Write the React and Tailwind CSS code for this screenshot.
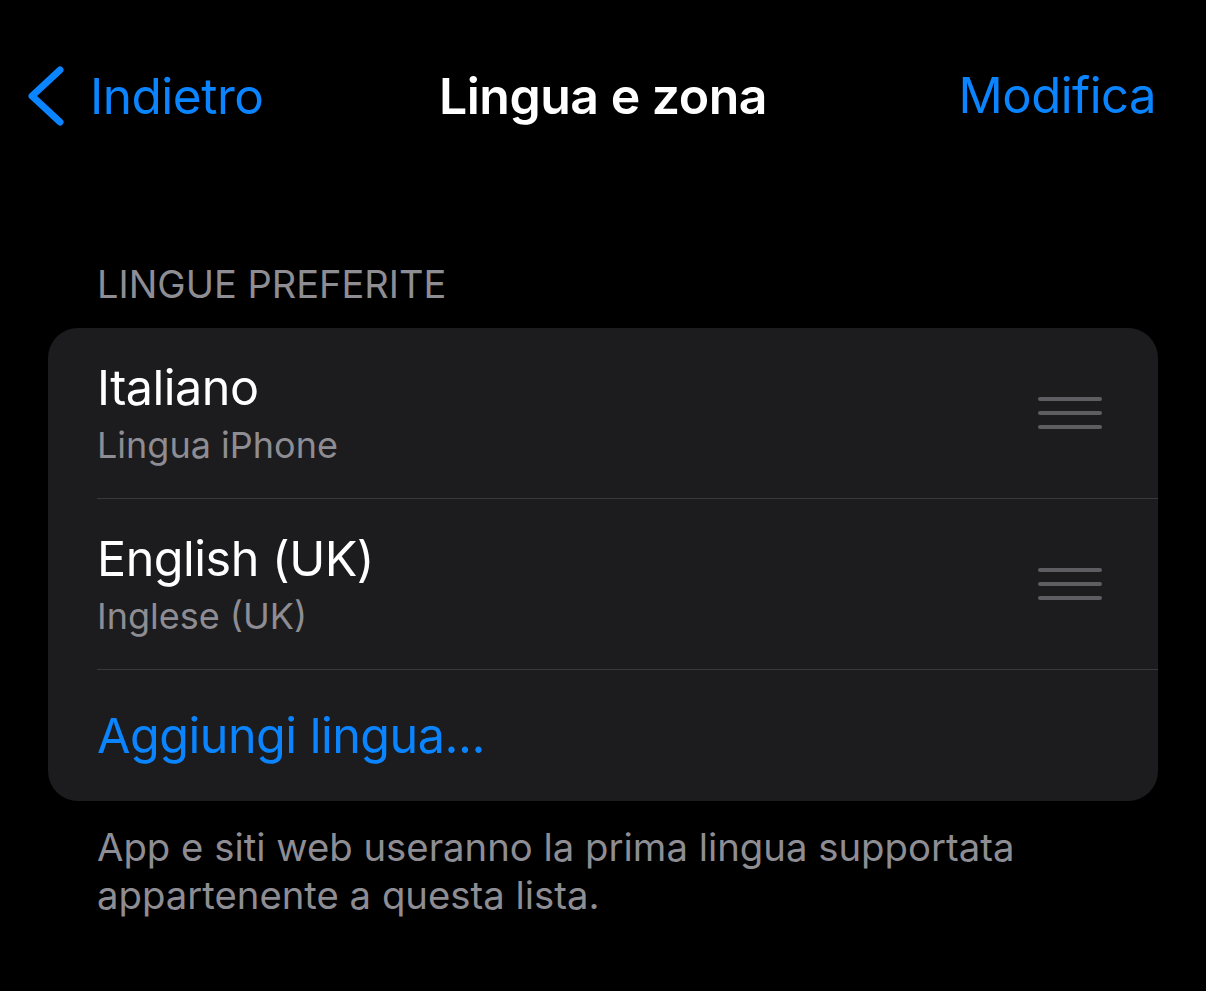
export default function App() {
  const font = { fontFamily: 'Inter, "Noto Sans", sans-serif' };
  const Handle = () => (
    <div className="flex flex-col gap-[10px] w-[64px]">
      <div className="h-[4px] rounded-full bg-[#5d5d62]" />
      <div className="h-[4px] rounded-full bg-[#5d5d62]" />
      <div className="h-[4px] rounded-full bg-[#5d5d62]" />
    </div>
  );
  return (
    <div className="w-[1206px] h-[991px] bg-black overflow-hidden" style={font}>
      {/* Nav */}
      <div className="relative h-[195px] flex items-start pt-[66px]">
        <div className="flex items-center pl-[26px] text-[#0a84ff]">
          <svg width="40" height="60" viewBox="0 0 40 60" className="mr-[24px]">
            <path d="M34 4 L6 30 L34 56" fill="none" stroke="#0a84ff" strokeWidth="7" strokeLinecap="round" strokeLinejoin="round" />
          </svg>
          <span className="text-[49.5px] leading-[60px] tracking-[-0.5px]">Indietro</span>
        </div>
        <div className="absolute left-0 right-0 top-[66px] flex justify-center pointer-events-none">
          <span className="text-[50px] leading-[60px] font-semibold text-white tracking-[-0.5px]">Lingua e zona</span>
        </div>
        <div className="ml-auto pr-[50px] flex items-center h-[60px]">
          <span className="text-[49px] leading-[60px] text-[#0a84ff] tracking-[-0.5px]">Modifica</span>
        </div>
      </div>

      {/* Section */}
      <div className="px-[48px]">
        <div className="pl-[49px] text-[38px] leading-[48px] text-[#8d8d93] uppercase pt-[65px] pb-[20px]">Lingue preferite</div>
        <div className="bg-[#1c1c1e] rounded-[30px] w-[1110px]">
          <div className="flex items-center h-[170px] pl-[49px] pr-[56px]">
            <div className="flex-1">
              <div className="text-[48.5px] leading-[60px] text-white tracking-[-0.5px]">Italiano</div>
              <div className="text-[36px] leading-[46px] text-[#8d8d93] mt-[4px]">Lingua iPhone</div>
            </div>
            <Handle />
          </div>
          <div className="ml-[49px] h-px bg-[#3a3a3c]" />
          <div className="flex items-center h-[170px] pl-[49px] pr-[56px]">
            <div className="flex-1">
              <div className="text-[48.5px] leading-[60px] text-white tracking-[-0.5px]">English (UK)</div>
              <div className="text-[36px] leading-[46px] text-[#8d8d93] mt-[4px]">Inglese (UK)</div>
            </div>
            <Handle />
          </div>
          <div className="ml-[49px] h-px bg-[#3a3a3c]" />
          <div className="flex items-center h-[131px] pl-[49px]">
            <span className="text-[48.5px] leading-[60px] text-[#0a84ff] tracking-[-0.5px]">Aggiungi lingua...</span>
          </div>
        </div>
        <div className="pl-[49px] pt-[22px] pr-[60px] text-[38.3px] leading-[48px] text-[#8d8d93]">
          App e siti web useranno la prima lingua supportata appartenente a questa lista.
        </div>
      </div>
    </div>
  );
}
